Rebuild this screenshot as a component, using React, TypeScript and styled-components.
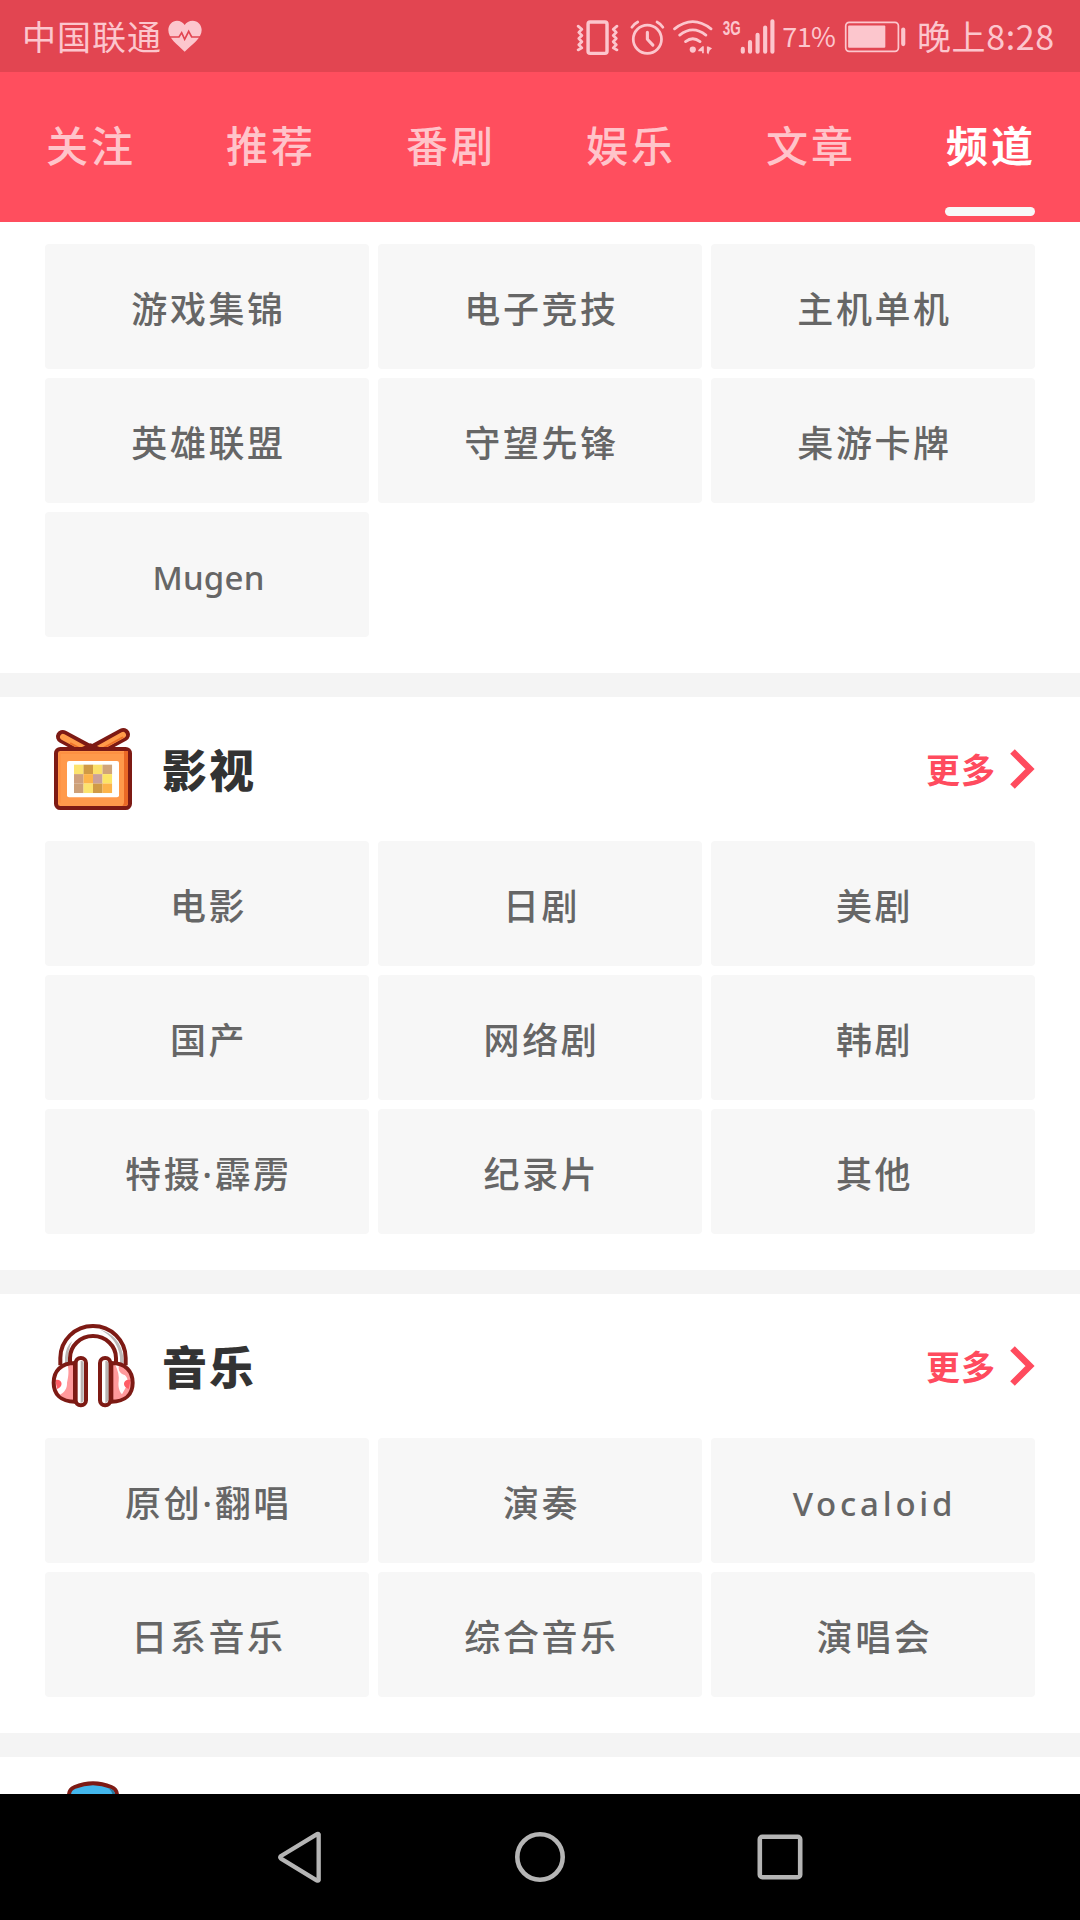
import React from 'react';
import styled, { createGlobalStyle } from 'styled-components';

const GlobalStyle = createGlobalStyle`
  * { box-sizing: border-box; }
  body {
    margin: 0;
    background: #fff;
    font-family: 'Noto Sans CJK SC', 'Noto Sans', sans-serif;
  }
`;

const INK = '#fcc6cd';
const MAROON = '#7d1a14';

const Screen = styled.div`
  width: 1080px;
  height: 1920px;
  display: flex;
  flex-direction: column;
  overflow: hidden;
  background: #fff;
`;

const StatusBar = styled.header`
  height: 72px;
  flex: none;
  display: flex;
  align-items: center;
  justify-content: space-between;
  padding: 0 22px 0 22px;
  background: #e24551;
  color: ${INK};
  white-space: nowrap;
`;

const StatusGroup = styled.div`
  display: flex;
  align-items: center;
`;

const Carrier = styled.span`
  font-size: 34px;
  line-height: 72px;
  letter-spacing: 1px;
  margin-right: 5px;
`;

const Percent = styled.span`
  width: 66px;
  padding-left: 4px;
  font-size: 27px;
  line-height: 66px;
  letter-spacing: -0.6px;
`;

const Clock = styled.span`
  width: 149px;
  padding-left: 8px;
  font-size: 34px;
  line-height: 74px;
  letter-spacing: 0.6px;
`;

const Glyph = styled.svg`
  display: block;
  flex: none;
`;

const TabBar = styled.nav`
  height: 150px;
  flex: none;
  display: flex;
  justify-content: space-between;
  padding: 0 45px;
  background: #ff4e5e;
`;

const Tab = styled.div<{ $active?: boolean }>`
  width: 90px;
  display: flex;
  flex-direction: column;
  justify-content: space-between;
  padding-bottom: 6px;
  color: ${(p) => (p.$active ? '#fff' : '#ffc4ca')};
  font-size: 42px;
  font-weight: ${(p) => (p.$active ? 700 : 500)};
  line-height: 144px;
  letter-spacing: 3px;
  padding-left: 1px;
  white-space: nowrap;
`;

const TabLabel = styled.span`
  height: 135px;
`;

const TabMarker = styled.span`
  height: 9px;
  margin-left: -1px;
  border-radius: 5px;
  background: #f8f8f8;
`;

const Content = styled.main`
  flex: 1;
  min-height: 0;
  overflow: hidden;
`;

const Section = styled.section`
  padding: 0 45px 36px;
  border-bottom: 24px solid #f4f4f4;
`;

const SectionHeader = styled.div`
  height: 144px;
  display: flex;
  align-items: center;
  padding-left: 5px;
`;

const Title = styled.h2`
  flex: 1;
  margin: 0 0 0 25px;
  color: #333;
  font-size: 45px;
  font-weight: 900;
  line-height: 60px;
  letter-spacing: 2px;
`;

const More = styled.a`
  display: flex;
  align-items: center;
  gap: 13px;
  color: #ff4b5e;
  font-size: 34px;
  font-weight: 700;
  line-height: 48px;
  letter-spacing: 1px;
`;

const Grid = styled.div<{ $top?: number }>`
  display: grid;
  grid-template-columns: repeat(3, 324px);
  grid-auto-rows: 125px;
  gap: 9px;
  padding-top: ${(p) => p.$top ?? 0}px;
`;

const Tile = styled.div<{ $latin?: boolean; $tracking: number }>`
  display: flex;
  align-items: center;
  justify-content: center;
  padding: 6px 0 0 3px;
  border-radius: 4px;
  background: #f7f7f7;
  color: #666;
  font-family: 'Noto Sans', 'Noto Sans CJK SC', sans-serif;
  font-size: ${(p) => (p.$latin ? 33 : 36)}px;
  font-weight: 500;
  line-height: 50px;
  letter-spacing: ${(p) => p.$tracking}px;
`;

const NavBar = styled.footer`
  height: 126px;
  flex: none;
  display: flex;
  align-items: center;
  justify-content: center;
  gap: 190px;
  background: #000;
`;

type StatusGlyphProps = { from: number; to: number; children: React.ReactNode };

function StatusGlyph({ from, to, children }: StatusGlyphProps) {
  return (
    <Glyph
      width={(to - from) / 2.904}
      height={40}
      viewBox={`${from} 46.5 ${to - from} 116.16`}
      fill="none"
      stroke={INK}
      strokeWidth={8}
      strokeLinecap="round"
      strokeLinejoin="round"
    >
      {children}
    </Glyph>
  );
}

function Heart() {
  return (
    <Glyph width={36} height={36} viewBox="500 55 108 108">
      <path d="M553 156C530 134 504 116 504 91c0-16 12-28 26-28 10 0 18 5 23 13 5-8 13-13 24-13 15 0 27 12 27 28 0 25-28 43-51 65z" fill={INK} />
      <path d="M502 112h34l8-13 9 20 12-24 9 17h33" fill="none" stroke="#e24551" strokeWidth="5" />
    </Glyph>
  );
}

const MOSAIC = [
  ['#fce36e', '#d09a45', '#fbe069', '#d0a47a'],
  ['#cfa07d', '#fdb44a', '#caa19a', '#fde565'],
  ['#cda078', '#fce36e', '#d09a45', '#fdb44a'],
];

function TvIcon() {
  return (
    <Glyph width={87} height={90} viewBox="60 72 261 270">
      <g strokeLinecap="round">
        <path d="M98 110l77 41M280 104l-87 47" stroke={MAROON} strokeWidth="40" />
        <path d="M99 111l68 37" stroke="#ff9c4a" strokeWidth="18" />
        <path d="M279 105l-78 43" stroke="#ff9c4a" strokeWidth="18" />
        <path d="M122 130l30 16M278 112l-64 35" stroke="#ee7029" strokeWidth="5" />
      </g>
      <path d="M156 141l26-11 26 11z" fill={MAROON} />
      <rect x="78" y="147" width="222" height="177" rx="13" fill="#ff994b" stroke={MAROON} strokeWidth="12" />
      <path d="M86 156h198v6H92v146h-6z" fill="#f98235" opacity=".35" />
      <path d="M282 153h12v155q0 9-9 9h-8q5-2 5-10z" fill="#ea6826" />
      <rect x="111" y="183" width="156" height="109" rx="6" fill="#fff" />
      {MOSAIC.map((row, r) =>
        row.map((color, c) => (
          <rect key={`${r}-${c}`} x={132 + c * 28.5} y={194 + r * 28.3} width="28.7" height="28.5" fill={color} />
        )),
      )}
    </Glyph>
  );
}

function HeadphonesIcon() {
  return (
    <Glyph width={87} height={90} viewBox="60 63 261 270">
      <path d="M91 194v-20a98 96 0 0 1 196 0v20h-26v-20a70 66 0 0 0-141 0v20z" fill="#fff" />
      <path d="M207 87q65 20 73 85v22h-10v-22q-7-58-63-85zM105 193v-21q3-34 22-49-12 22-13 49v21z" fill="#bcb8b7" />
      <g fill="none" stroke={MAROON} strokeWidth="12">
        <path d="M91 196v-22a98 96 0 0 1 196 0v22" />
        <path d="M120 190v-16a69 66 0 0 1 138 0v16" />
      </g>
      <path d="M135 189c-43 0-64 25-64 59s21 57 64 57zM244 189c43 0 64 25 64 59s-21 57-64 57z" fill="#ff9a9c" />
      <path d="M112 193c6 18 3 39-1 55 1 17-8 29-21 36-14-15-19-48-7-68 9-9 18-8 29-23zM267 194c-4 17 4 27 17 31 10 7 11 22 6 33l-14 25c-10-10-12-27-10-39 2-16-2-32-10-50z" fill="#fff" />
      <path d="M76 240c22-5 26 22 5 27zM302 240c-24-5-27 22-6 27z" fill="#ff5d66" />
      <path d="M135 189c-43 0-64 25-64 59s21 57 64 57zM244 189c43 0 64 25 64 59s-21 57-64 57z" fill="none" stroke={MAROON} strokeWidth="12" />
      <rect x="137" y="174" width="31" height="142" rx="15" fill="#fff" stroke={MAROON} strokeWidth="12" />
      <rect x="210" y="174" width="31" height="142" rx="15" fill="#fff" stroke={MAROON} strokeWidth="12" />
      <path d="M152 183q9-2 9 7v110q-2 8-9 9zM226 183q9-2 9 7v110q-2 8-9 9z" fill="#b9b4b3" />
    </Glyph>
  );
}

function JarIcon() {
  return (
    <Glyph width={87} height={100} viewBox="60 297 261 300">
      <path d="M117 345q0-17 17-24 55-23 110 0 17 7 17 24v120H117z" fill="#43b7ed" stroke={MAROON} strokeWidth="12" />
      <path d="M235 324q21 6 21 24h-8q0-13-13-24z" fill="#2a789d" />
    </Glyph>
  );
}

function Header({ icon, title }: { icon: React.ReactNode; title: string }) {
  return (
    <SectionHeader>
      {icon}
      <Title>{title}</Title>
      <More>
        更多
        <Glyph width={26} height={42} viewBox="0 0 26 42">
          <path d="M3.5 3.5L21 21 3.5 38.5" fill="none" stroke="#ff4b5e" strokeWidth="6.5" />
        </Glyph>
      </More>
    </SectionHeader>
  );
}

const TRACKING: Record<string, number> = { Mugen: 0.2, Vocaloid: 3.8 };

function Tiles({ items, top }: { items: string[]; top?: number }) {
  return (
    <Grid $top={top}>
      {items.map((item) => (
        <Tile key={item} $latin={item in TRACKING} $tracking={TRACKING[item] ?? 2.6}>
          {item}
        </Tile>
      ))}
    </Grid>
  );
}

const TABS = ['关注', '推荐', '番剧', '娱乐', '文章', '频道'];
const GAMES = ['游戏集锦', '电子竞技', '主机单机', '英雄联盟', '守望先锋', '桌游卡牌', 'Mugen'];
const FILMS = ['电影', '日剧', '美剧', '国产', '网络剧', '韩剧', '特摄·霹雳', '纪录片', '其他'];
const MUSIC = ['原创·翻唱', '演奏', 'Vocaloid', '日系音乐', '综合音乐', '演唱会'];

export default function App() {
  return (
    <Screen>
      <GlobalStyle />
      <StatusBar>
        <StatusGroup>
          <Carrier>中国联通</Carrier>
          <Heart />
        </StatusGroup>
        <StatusGroup>
          <StatusGlyph from={100} to={244}>
            <rect x="138" y="64" width="55" height="91" rx="6" strokeWidth="10" />
            <path d="M109 76l11 9-9 9 9 9-9 9 9 9-9 9 9 9-11 6M222 76l-11 9 9 9-9 9 9 9-9 9 9 9-9 9 11 6" />
          </StatusGlyph>
          <StatusGlyph from={244} to={370}>
            <circle cx="309" cy="114" r="41" />
            <path d="M309 94v20l16 17" strokeWidth="9" />
            <path d="M264 79q7-10 17-15M354 79q-7-10-17-15" />
          </StatusGlyph>
          <StatusGlyph from={370} to={515}>
            <path d="M389 84q53-42 106 0M404 102q38-30 76 0M421 121q21-17 42 0" />
            <circle cx="442" cy="144" r="9" fill={INK} stroke="none" />
            <path d="M474 134v21h-5v-6h-11v-4l12-11zM483 135h4l11 5-7 7-4 11-4-5z" fill={INK} stroke="none" />
          </StatusGlyph>
          <StatusGlyph from={515} to={690}>
            <text
              x="529"
              y="102"
              fill={INK}
              stroke="none"
              fontFamily="'Liberation Sans', Arial, sans-serif"
              fontWeight="700"
              fontSize="58"
              textLength="52"
              lengthAdjust="spacingAndGlyphs"
            >
              3G
            </text>
            <path d="M587 142v8M608 122v28M630 101v49M652 80v70M673 62v88" strokeWidth="12" />
          </StatusGlyph>
          <Percent>71%</Percent>
          <StatusGlyph from={882} to={1070}>
            <rect x="887" y="65" width="153" height="84" rx="10" strokeWidth="5" />
            <rect x="894" y="74" width="108" height="65" rx="3" fill={INK} stroke="none" />
            <path d="M1054 86v42" strokeWidth="12" />
          </StatusGlyph>
          <Clock>晚上8:28</Clock>
        </StatusGroup>
      </StatusBar>

      <TabBar>
        {TABS.map((tab) => (
          <Tab key={tab} $active={tab === '频道'}>
            <TabLabel>{tab}</TabLabel>
            {tab === '频道' && <TabMarker />}
          </Tab>
        ))}
      </TabBar>

      <Content>
        <Section>
          <Tiles items={GAMES} top={22} />
        </Section>
        <Section>
          <Header icon={<TvIcon />} title="影视" />
          <Tiles items={FILMS} />
        </Section>
        <Section>
          <Header icon={<HeadphonesIcon />} title="音乐" />
          <Tiles items={MUSIC} />
        </Section>
        <Section>
          <SectionHeader>
            <JarIcon />
          </SectionHeader>
        </Section>
      </Content>

      <NavBar>
        <Glyph width={50} height={56} viewBox="735 447 150 168" fill="none">
          <path d="M866 463v137q-2 3-6 1L753 536q-5-4 0-8L860 463q4-3 6 0z" stroke="#b5b5b5" strokeWidth="13" strokeLinejoin="round" />
        </Glyph>
        <Glyph width={50} height={50} viewBox="0 0 50 50" fill="none">
          <circle cx="25" cy="25" r="22.7" stroke="#b5b5b5" strokeWidth="4.6" />
        </Glyph>
        <Glyph width={50} height={50} viewBox="0 0 50 50" fill="none">
          <rect x="4.8" y="4.8" width="40.4" height="40.4" rx="2.5" stroke="#b5b5b5" strokeWidth="4.6" />
        </Glyph>
      </NavBar>
    </Screen>
  );
}
